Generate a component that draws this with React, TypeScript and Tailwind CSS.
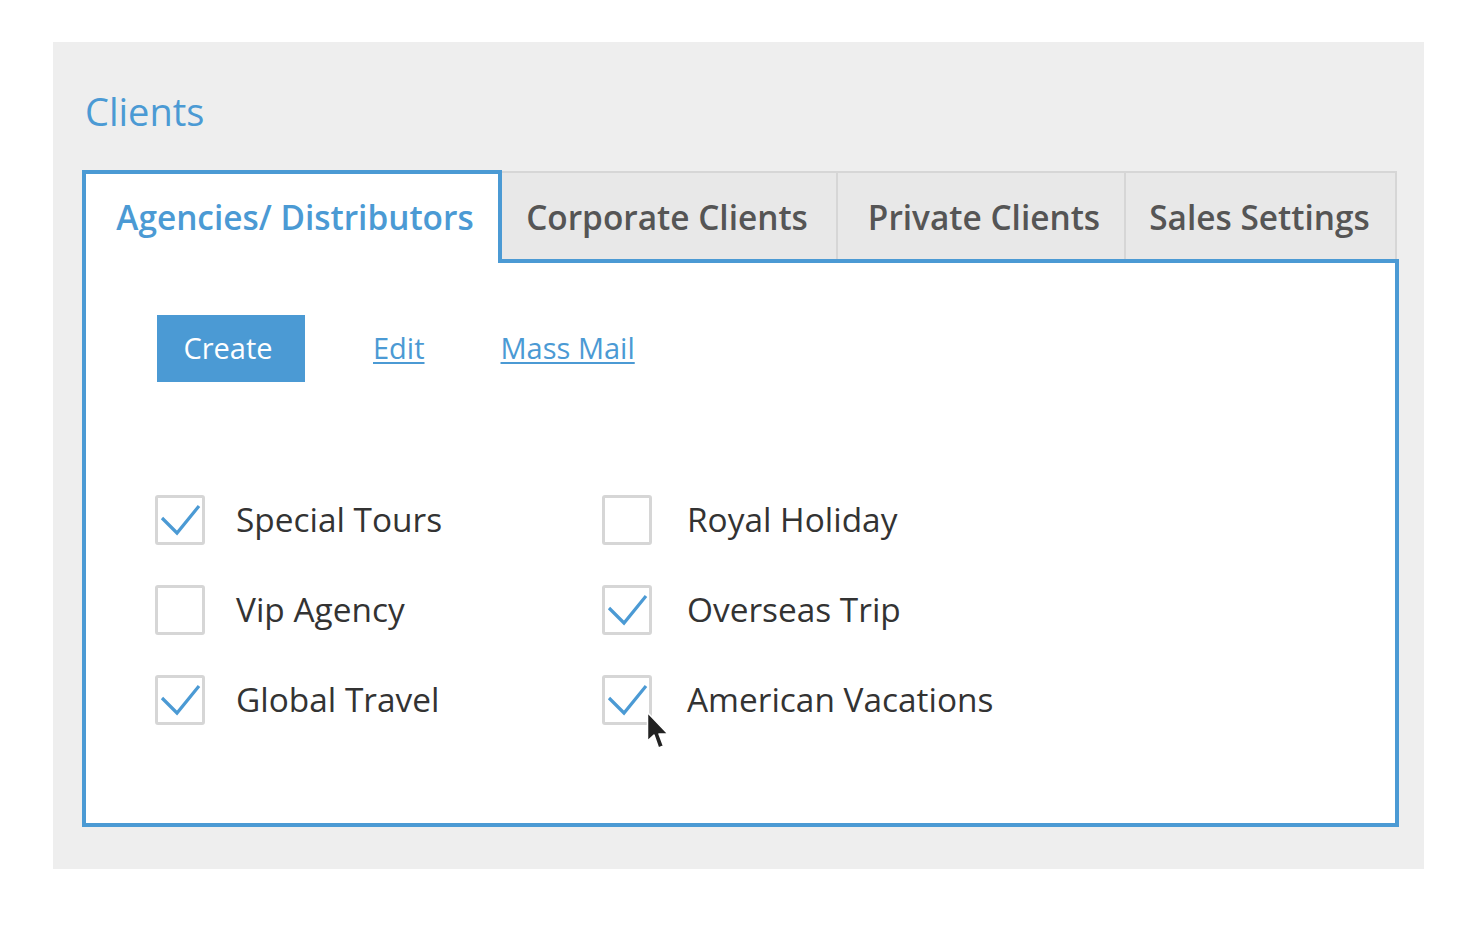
import { useState } from 'react'

const BLUE = 'text-[#4b9ad4]'

const tabs = [
  { label: 'Agencies/ Distributors', width: 'w-[420px] pl-[6px]' },
  { label: 'Corporate Clients', width: 'w-[336px] pr-[4px]' },
  { label: 'Private Clients', width: 'w-[288px] pl-[6px]' },
  { label: 'Sales Settings', width: 'w-[271px] pr-[2px]' },
]

const initialItems = [
  { name: 'Special Tours', checked: true },
  { name: 'Royal Holiday', checked: false },
  { name: 'Vip Agency', checked: false },
  { name: 'Overseas Trip', checked: true },
  { name: 'Global Travel', checked: true },
  { name: 'American Vacations', checked: true },
]

function Check() {
  return (
    <svg viewBox="0 0 50 50" className="absolute -inset-[3px] h-[50px] w-[50px]">
      <polyline
        points="7,23 22,38 44,11"
        fill="none"
        stroke="#4b9ad4"
        strokeWidth="3.2"
      />
    </svg>
  )
}

// mouse pointer drawn over the last checkbox
function Cursor() {
  return (
    <svg
      viewBox="0 0 24 41"
      className="pointer-events-none absolute left-[41px] top-[33px] h-[41px] w-[24px]"
    >
      <path
        d="M1.5 1.5 L1.5 30 L8 24 L12.5 37 L17.5 35 L13 23 L22 23 Z"
        fill="#222"
        stroke="#fff"
        strokeWidth="1.5"
        strokeLinejoin="round"
      />
    </svg>
  )
}

export default function App() {
  const [active, setActive] = useState(0)
  const [items, setItems] = useState(initialItems)

  const toggle = (i: number) =>
    setItems((prev) => prev.map((it, j) => (j === i ? { ...it, checked: !it.checked } : it)))

  return (
    <div className="min-h-[932px] bg-white pl-[53px] pt-[42px] font-['Open_Sans',sans-serif]">
      <div className="h-[827px] w-[1371px] bg-[#eeeeee] pl-[29px] pt-[40px]">
        <h1 className={`${BLUE} ml-[3px] text-[38px] leading-[58px]`}>Clients</h1>

        {/* Tabs */}
        <div className="mt-[30px] flex items-end">
          {tabs.map((t, i) =>
            i === active ? (
              <button
                key={t.label}
                onClick={() => setActive(i)}
                className={`${t.width} relative z-10 -mb-[4px] flex h-[93px] items-center justify-center border-4 border-b-0 border-[#4b9ad4] bg-white pb-[2px] text-[33.4px] font-semibold ${BLUE}`}
              >
                {t.label}
              </button>
            ) : (
              <button
                key={t.label}
                onClick={() => setActive(i)}
                className={`${t.width} flex h-[88px] items-center justify-center border-2 border-b-0 border-l-0 border-[#d6d6d6] bg-[#e8e8e8] pt-[2px] text-[33.4px] font-semibold text-[#555555]`}
              >
                {t.label}
              </button>
            ),
          )}
        </div>

        {/* Panel */}
        <div className="h-[568px] w-[1317px] border-4 border-[#4b9ad4] bg-white pl-[71px] pt-[52px]">
          <div className="flex items-center">
            <button className="h-[67px] w-[148px] bg-[#4b9ad4] pb-[2px] pr-[6px] text-[29px] text-white">
              Create
            </button>
            <a href="#" className={`ml-[68px] pb-[2px] text-[29px] underline underline-offset-[3px] ${BLUE}`}>
              Edit
            </a>
            <a href="#" className={`ml-[76px] pb-[2px] text-[29px] underline underline-offset-[3px] ${BLUE}`}>
              Mass Mail
            </a>
          </div>

          <div className="-ml-[2px] mt-[113px] grid w-[900px] grid-cols-[447px_1fr] gap-y-[40px]">
            {items.map((it, i) => (
              <label key={it.name} className="flex h-[50px] cursor-pointer items-center">
                <span
                  onClick={() => toggle(i)}
                  className="relative h-[50px] w-[50px] shrink-0 rounded-[3px] border-[3px] border-[#d6d6d6] bg-white"
                >
                  {it.checked && <Check />}
                  {i === 5 && <Cursor />}
                </span>
                <span className={`${i % 2 ? 'ml-[35px]' : 'ml-[31px]'} pb-[2px] text-[33.4px] text-[#333333]`}>
                  {it.name}
                </span>
              </label>
            ))}
          </div>
        </div>
      </div>
    </div>
  )
}
